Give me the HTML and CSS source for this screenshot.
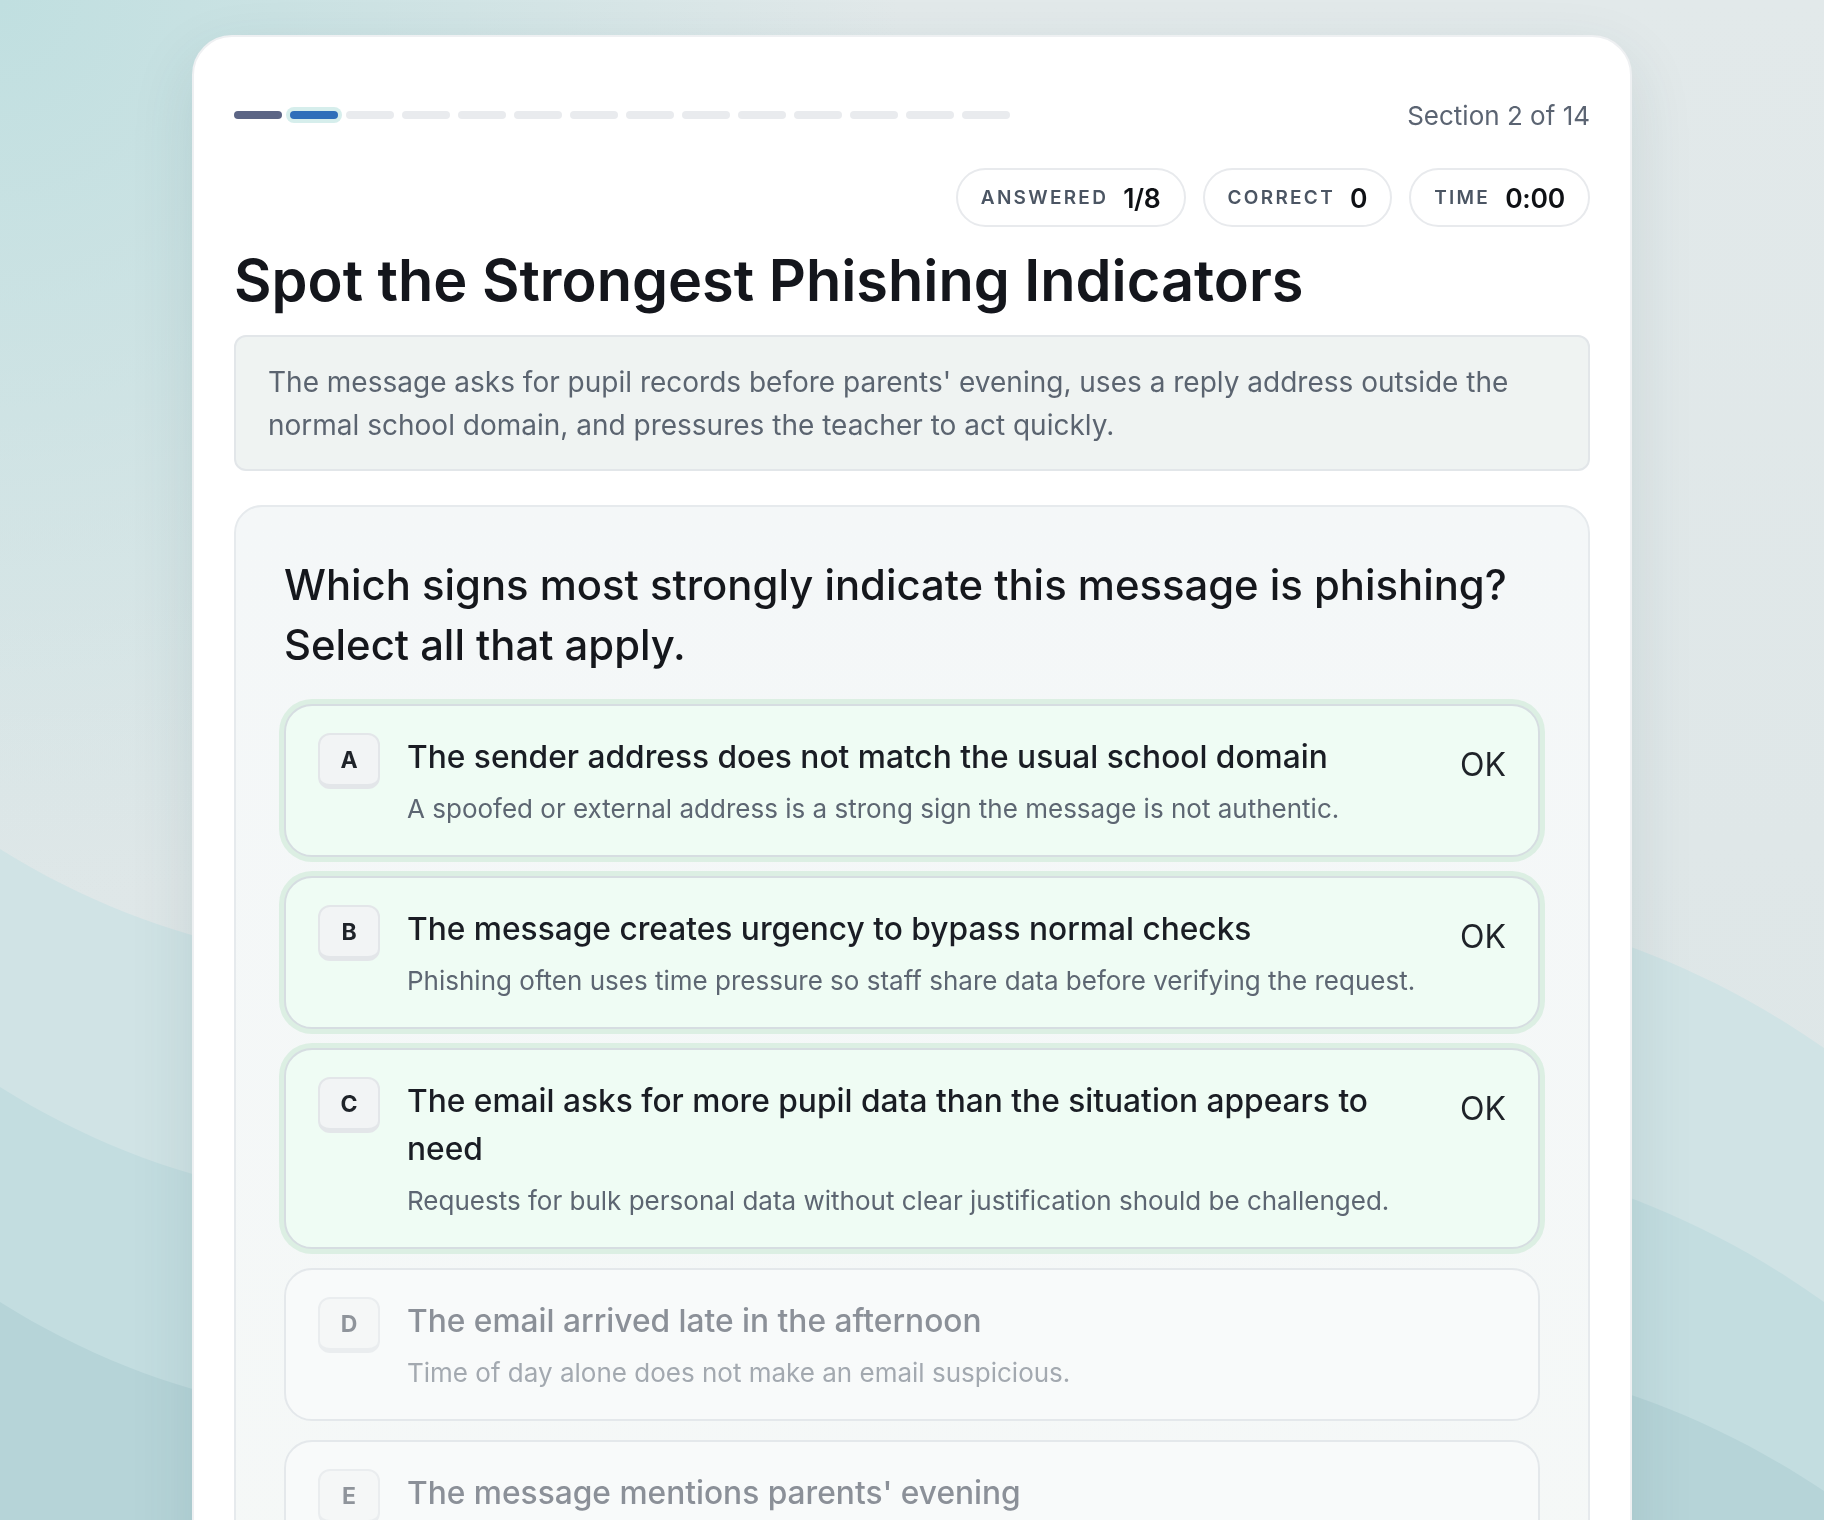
FILE: index.html
```html
<!DOCTYPE html>
<html lang="en">
<head>
<meta charset="utf-8">
<title>Spot the Strongest Phishing Indicators</title>
<link rel="stylesheet" href="styles.css">
</head>
<body>
<svg class="backdrop" viewBox="0 0 1824 1520" preserveAspectRatio="none" aria-hidden="true">
  <path class="wave wave-1" d="M0,849 C560,1200 1240,640 1824,1048 L1824,1520 L0,1520 Z"/>
  <path class="wave wave-2" d="M0,1087 C560,1440 1240,885 1824,1302 L1824,1520 L0,1520 Z"/>
  <path class="wave wave-3" d="M0,1302 C560,1655 1240,1100 1824,1491 L1824,1520 L0,1520 Z"/>
</svg>

<main class="quiz-card">
  <header class="quiz-top">
    <div class="progress">
      <span class="step done"></span>
      <span class="step current"></span>
      <span class="step"></span>
      <span class="step"></span>
      <span class="step"></span>
      <span class="step"></span>
      <span class="step"></span>
      <span class="step"></span>
      <span class="step"></span>
      <span class="step"></span>
      <span class="step"></span>
      <span class="step"></span>
      <span class="step"></span>
      <span class="step"></span>
    </div>
    <span class="section-count">Section 2 of 14</span>
  </header>

  <div class="stats">
    <div class="stat"><span class="stat-label">Answered</span><span class="stat-value">1/8</span></div>
    <div class="stat"><span class="stat-label">Correct</span><span class="stat-value">0</span></div>
    <div class="stat"><span class="stat-label">Time</span><span class="stat-value">0:00</span></div>
  </div>

  <h1 class="quiz-title">Spot the Strongest Phishing Indicators</h1>

  <p class="scenario">The message asks for pupil records before parents' evening, uses a reply address outside the normal school domain, and pressures the teacher to act quickly.</p>

  <section class="question">
    <h2 class="question-text">Which signs most strongly indicate this message is phishing? Select all that apply.</h2>

    <ul class="options">
      <li class="option is-selected">
        <span class="option-key">A</span>
        <div class="option-body">
          <div class="option-title">The sender address does not match the usual school domain</div>
          <div class="option-note">A spoofed or external address is a strong sign the message is not authentic.</div>
        </div>
        <span class="option-mark">OK</span>
      </li>
      <li class="option is-selected">
        <span class="option-key">B</span>
        <div class="option-body">
          <div class="option-title">The message creates urgency to bypass normal checks</div>
          <div class="option-note">Phishing often uses time pressure so staff share data before verifying the request.</div>
        </div>
        <span class="option-mark">OK</span>
      </li>
      <li class="option is-selected">
        <span class="option-key">C</span>
        <div class="option-body">
          <div class="option-title">The email asks for more pupil data than the situation appears to need</div>
          <div class="option-note">Requests for bulk personal data without clear justification should be challenged.</div>
        </div>
        <span class="option-mark">OK</span>
      </li>
      <li class="option is-muted">
        <span class="option-key">D</span>
        <div class="option-body">
          <div class="option-title">The email arrived late in the afternoon</div>
          <div class="option-note">Time of day alone does not make an email suspicious.</div>
        </div>
      </li>
      <li class="option is-muted">
        <span class="option-key">E</span>
        <div class="option-body">
          <div class="option-title">The message mentions parents' evening</div>
          <div class="option-note">Referring to a real school event is normal and not a warning sign on its own.</div>
        </div>
      </li>
    </ul>
  </section>
</main>
</body>
</html>
```
FILE: styles.css
```css
html,
body {
  margin: 0;
  padding: 0;
}

body {
  font-family: Inter, "Noto Sans", "Liberation Sans", sans-serif;
  color: #15171c;
  background:
    radial-gradient(circle at 0 0, rgba(192, 223, 224, 1) 0, rgba(192, 223, 224, 0.55) 420px, rgba(192, 223, 224, 0) 900px),
    linear-gradient(180deg, #e2e9ea 0%, #dce5e6 100%);
  min-height: 1520px;
  overflow: hidden;
}

/* decorative wave layers behind the card */
.backdrop {
  position: fixed;
  inset: 0;
  width: 100%;
  height: 100%;
  z-index: 0;
}

.wave-1 { fill: #d0e3e5; }
.wave-2 { fill: #c3dde0; }
.wave-3 { fill: #b6d4d8; }

/* main card */
.quiz-card {
  position: relative;
  z-index: 1;
  box-sizing: border-box;
  width: 1440px;
  margin: 35px auto 0;
  padding: 60px 40px 48px;
  background: #ffffff;
  border: 2px solid #eef0f2;
  border-radius: 40px;
  box-shadow: 0 24px 64px rgba(32, 70, 80, 0.12);
}

.quiz-top {
  display: flex;
  align-items: center;
  justify-content: space-between;
  height: 36px;
}

.progress {
  display: flex;
  gap: 8px;
}

.step {
  width: 48px;
  height: 8px;
  border-radius: 4px;
  background: #e9ebee;
}

.step.done {
  background: #5c6585;
}

.step.current {
  background: #2f6fba;
  box-shadow: 0 0 0 4px #d6eeec;
}

.section-count {
  font-size: 26px;
  color: #5b6472;
}

/* stat chips */
.stats {
  display: flex;
  justify-content: flex-end;
  gap: 17px;
  margin-top: 35px;
}

.stat {
  display: flex;
  align-items: center;
  gap: 15px;
  height: 59px;
  box-sizing: border-box;
  padding: 0 23px;
  border: 2px solid #e8eaed;
  border-radius: 999px;
  background: #ffffff;
}

.stat-label {
  font-size: 19px;
  font-weight: 600;
  letter-spacing: 0.12em;
  text-transform: uppercase;
  color: #4b5563;
}

.stat-value {
  font-size: 26.5px;
  font-weight: 600;
  letter-spacing: -0.01em;
  color: #0f1115;
}

.quiz-title {
  margin: 20px 0 0;
  font-size: 57.7px;
  line-height: 67px;
  font-weight: 600;
  color: #14161c;
}

.scenario {
  margin: 21px 0 0;
  padding: 24px 32px 22px;
  font-size: 28px;
  line-height: 43px;
  color: #5b6470;
  background: #eff3f2;
  border: 2px solid #e2e6e9;
  border-radius: 12px;
}

/* question panel */
.question {
  margin-top: 34px;
  padding: 48px 48px 40px;
  background: linear-gradient(180deg, #f4f7f8 0%, #f5f8f7 100%);
  border: 2px solid #e6eaed;
  border-radius: 28px;
}

.question-text {
  margin: 0 0 29px;
  font-size: 41.8px;
  line-height: 60px;
  font-weight: 500;
  color: #15171c;
}

.options {
  list-style: none;
  margin: 0;
  padding: 0;
  display: flex;
  flex-direction: column;
  gap: 19px;
}

.option {
  display: flex;
  align-items: flex-start;
  gap: 27px;
  padding: 27px 32px 28px;
  border: 2px solid #e4e8eb;
  border-radius: 28px;
  background: #f8fafa;
}

.option.is-selected {
  background: #effcf4;
  border-color: #d6dde1;
  box-shadow: 0 0 0 5px #dcefe3;
}

.option-key {
  flex: none;
  box-sizing: border-box;
  width: 62px;
  height: 56px;
  display: flex;
  align-items: center;
  justify-content: center;
  font-size: 23px;
  font-weight: 700;
  color: #1f2329;
  background: #f2f4f5;
  border: 2px solid #e3e6e9;
  border-bottom-width: 5px;
  border-radius: 12px;
}

.option-body {
  flex: 1;
  min-width: 0;
}

.option-title {
  font-size: 31.7px;
  line-height: 48px;
  font-weight: 500;
  color: #1a1d24;
}

.option-note {
  margin-top: 10px;
  font-size: 26px;
  line-height: 36px;
  color: #5d6672;
}

.option-mark {
  flex: none;
  padding-top: 8px;
  font-size: 32px;
  line-height: 48px;
  color: #1f2329;
}

.option.is-muted .option-key {
  color: #8f949b;
  background: #f5f7f7;
  border-color: #eaedef;
}

.option.is-muted .option-title {
  color: #8b9098;
}

.option.is-muted .option-note {
  color: #a3a9b0;
}
```
